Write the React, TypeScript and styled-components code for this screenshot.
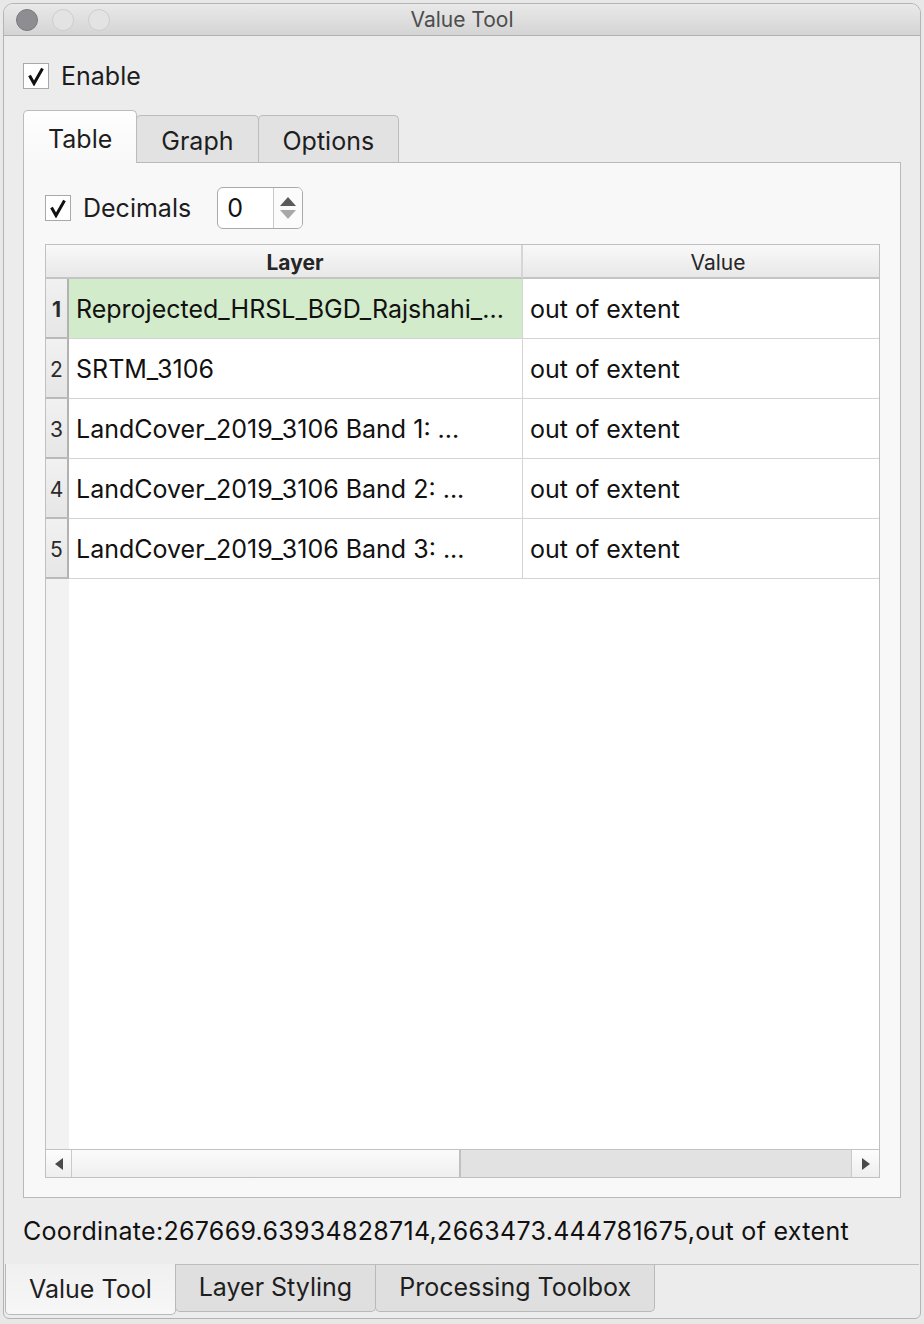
import React from "react";
import styled, { createGlobalStyle } from "styled-components";

const GlobalStyle = createGlobalStyle`
	html, body {
		margin: 0;
		background: #e8e8e8;
	}
	body {
		font-family: Inter, "Liberation Sans", sans-serif;
		color: #1d1d1d;
	}
	* {
		box-sizing: border-box;
	}
`;

const Window = styled.div`
	margin: 3px 0 0 3px;
	width: 918px;
	height: 1316px;
	border: 1px solid #b4b4b4;
	border-radius: 10px 10px 6px 6px;
	background: #ececec;
	display: flex;
	flex-direction: column;
	overflow: hidden;
`;

const TitleBar = styled.div`
	height: 32px;
	flex: none;
	display: grid;
	grid-template-columns: 1fr auto 1fr;
	align-items: center;
	padding: 0 12px;
	background: linear-gradient(#e9e9e9, #d4d4d4);
	border-bottom: 1px solid #b1b1b1;
`;

const Lights = styled.div`
	display: flex;
	gap: 14px;
`;

const Light = styled.span<{ $active?: boolean }>`
	width: 22px;
	height: 22px;
	border-radius: 50%;
	background: ${(p) => (p.$active ? "#8d8d92" : "#e3e3e3")};
	border: 1px solid ${(p) => (p.$active ? "#7a7a7e" : "#cdcdcd")};
`;

const Title = styled.div`
	font-size: 21px;
	color: #4d4d4d;
`;

const Body = styled.div`
	flex: 1;
	display: flex;
	flex-direction: column;
	padding: 27px 19px 3px 19px;
	min-height: 0;
`;

const CheckRow = styled.label`
	display: flex;
	align-items: center;
	gap: 12px;
	height: 26px;
	font-size: 25px;
`;

const Box = styled.span`
	width: 26px;
	height: 26px;
	border: 1px solid #a9a9a9;
	background: #fff;
	display: flex;
	align-items: center;
	justify-content: center;
`;

const TabBar = styled.div`
	display: flex;
	align-items: flex-end;
	height: 52px;
	margin-top: 21px;
	flex: none;
`;

const Tab = styled.div<{ $active?: boolean }>`
	position: relative;
	z-index: ${(p) => (p.$active ? 1 : 0)};
	height: ${(p) => (p.$active ? "53px" : "47px")};
	margin-bottom: ${(p) => (p.$active ? "-1px" : "0")};
	margin-left: ${(p) => (p.$active ? "0" : "-1px")};
	padding: 3px 24px 0;
	display: flex;
	align-items: center;
	font-size: 25px;
	color: #1e1e1e;
	border: 1px solid #bcbcbc;
	border-bottom: none;
	border-radius: 5px 5px 0 0;
	background: ${(p) => (p.$active ? "linear-gradient(#fefefe, #f8f8f8)" : "#e2e2e2")};
`;

const Pane = styled.div`
	flex: 1;
	min-height: 0;
	display: flex;
	flex-direction: column;
	border: 1px solid #b9b9b9;
	background: #f8f8f8;
	padding: 24px 20px 19px 21px;
`;

const OptionRow = styled.div`
	display: flex;
	align-items: center;
	height: 42px;
	flex: none;
`;

const Spin = styled.div`
	margin-left: 26px;
	width: 86px;
	height: 42px;
	border: 1px solid #a9a9a9;
	border-radius: 6px;
	background: #fff;
	display: flex;
	overflow: hidden;
`;

const SpinField = styled.div`
	flex: 1;
	display: flex;
	align-items: center;
	padding-left: 9px;
	font-size: 25px;
	color: #111;
	border-right: 1px solid #c9c9c9;
`;

const SpinArrows = styled.div`
	width: 28px;
	display: flex;
	flex-direction: column;
	align-items: center;
	justify-content: center;
	gap: 4px;
	background: #fbfbfb;
`;

const Table = styled.div`
	margin-top: 15px;
	flex: 1;
	min-height: 0;
	border: 1px solid #c0c0c0;
	background: #fff;
	display: flex;
	flex-direction: column;
	overflow: hidden;
`;

const Row = styled.div<{ $h: number }>`
	display: grid;
	grid-template-columns: 23px 454px 390px;
	height: ${(p) => p.$h}px;
	flex: none;
`;

const HeadCell = styled.div<{ $bold?: boolean; $sep?: boolean }>`
	display: flex;
	align-items: center;
	justify-content: center;
	padding-top: 2px;
	font-size: 21px;
	font-weight: ${(p) => (p.$bold ? 700 : 400)};
	color: #262626;
	background: linear-gradient(#f8f8f8, #e8e8e8);
	border-bottom: 2px solid #c4c4c4;
	border-right: ${(p) => (p.$sep ? "2px solid #d6d6d6" : "none")};
`;

const RowHead = styled.div<{ $current?: boolean }>`
	display: flex;
	align-items: center;
	justify-content: center;
	padding-top: 3px;
	font-size: 21px;
	font-weight: ${(p) => (p.$current ? 700 : 400)};
	color: #2a2a2a;
	background: linear-gradient(#f1f1f1, #e6e6e6);
	border-right: 2px solid #b2b2b2;
	border-bottom: 2px solid #bababa;
`;

const Cell = styled.div<{ $hit?: boolean; $sep?: boolean }>`
	display: flex;
	align-items: center;
	padding-left: 7px;
	font-size: 25px;
	color: #111;
	white-space: nowrap;
	overflow: hidden;
	background: ${(p) => (p.$hit ? "#d2ebca" : "#fff")};
	border-bottom: 1px solid #d4d4d4;
	border-right: ${(p) => (p.$sep ? "1px solid #d4d4d4" : "none")};
`;

const Empty = styled.div`
	flex: 1;
	background: linear-gradient(to right, #f2f2f2 23px, #fff 23px);
`;

const HScroll = styled.div`
	height: 28px;
	flex: none;
	display: grid;
	grid-template-columns: 26px 389px 1fr 28px;
	border-top: 1px solid #c3c3c3;
	background: #e2e2e2;
`;

const ScrollButton = styled.div<{ $side: "left" | "right" }>`
	display: flex;
	align-items: center;
	justify-content: center;
	background: linear-gradient(#fdfdfd, #eeeeee);
	${(p) => (p.$side === "left" ? "border-right: 1px solid #cacaca;" : "border-left: 1px solid #cacaca;")}
`;

const Thumb = styled.div`
	background: linear-gradient(#fbfbfb, #efefef);
	border-right: 2px solid #c0c0c0;
`;

const Coordinate = styled.div`
	margin-top: 18px;
	height: 30px;
	line-height: 30px;
	font-size: 25px;
	letter-spacing: 0.3px;
	color: #111;
	white-space: nowrap;
	flex: none;
`;

const DockTabs = styled.div`
	margin: 18px -18px 0 -18px;
	height: 51px;
	flex: none;
	display: flex;
	align-items: flex-start;
	border-top: 1px solid #bdbdbd;
`;

const DockTab = styled.div<{ $active?: boolean }>`
	height: ${(p) => (p.$active ? "51px" : "47px")};
	margin-top: ${(p) => (p.$active ? "-1px" : "0")};
	margin-left: ${(p) => (p.$active ? "0" : "-1px")};
	padding: 0 ${(p) => (p.$active ? "23px" : "23px")} ${(p) => (p.$active ? "0" : "2px")};
	display: flex;
	align-items: center;
	font-size: 25px;
	color: #1e1e1e;
	background: ${(p) => (p.$active ? "linear-gradient(#f0f0f0, #f7f7f7)" : "#dfdfdf")};
	border: 1px solid #b9b9b9;
	border-top: none;
	border-radius: 0 0 5px 5px;
`;

const Check = () => (
	<Box>
		<svg width="20" height="20" viewBox="0 0 20 20">
			<path d="M3.5 9.5 L8 17.5 L16.5 2.5" fill="none" stroke="#111" strokeWidth="3" />
		</svg>
	</Box>
);

const layers = [
	"Reprojected_HRSL_BGD_Rajshahi_...",
	"SRTM_3106",
	"LandCover_2019_3106 Band 1: ...",
	"LandCover_2019_3106 Band 2: ...",
	"LandCover_2019_3106 Band 3: ...",
];

export default function App() {
	return (
		<>
			<GlobalStyle />
			<Window>
				<TitleBar>
					<Lights>
						<Light $active />
						<Light />
						<Light />
					</Lights>
					<Title>Value Tool</Title>
					<span />
				</TitleBar>
				<Body>
					<CheckRow>
						<Check />
						Enable
					</CheckRow>
					<TabBar>
						<Tab $active>Table</Tab>
						<Tab>Graph</Tab>
						<Tab>Options</Tab>
					</TabBar>
					<Pane>
						<OptionRow>
							<CheckRow>
								<Check />
								Decimals
							</CheckRow>
							<Spin>
								<SpinField>0</SpinField>
								<SpinArrows>
									<svg width="16" height="9" viewBox="0 0 16 9">
										<path d="M8 0 L16 9 L0 9 Z" fill="#5a5a5a" />
									</svg>
									<svg width="16" height="9" viewBox="0 0 16 9">
										<path d="M0 0 L16 0 L8 9 Z" fill="#a8a8a8" />
									</svg>
								</SpinArrows>
							</Spin>
						</OptionRow>
						<Table>
							<Row $h={34}>
								<HeadCell />
								<HeadCell $bold $sep>Layer</HeadCell>
								<HeadCell>Value</HeadCell>
							</Row>
							{layers.map((name, i) => (
								<Row $h={60} key={name}>
									<RowHead $current={i === 0}>{i + 1}</RowHead>
									<Cell $hit={i === 0} $sep>{name}</Cell>
									<Cell>out of extent</Cell>
								</Row>
							))}
							<Empty />
							<HScroll>
								<ScrollButton $side="left">
									<svg width="8" height="12" viewBox="0 0 8 12">
										<path d="M8 0 L8 12 L0 6 Z" fill="#4a4a4a" />
									</svg>
								</ScrollButton>
								<Thumb />
								<span />
								<ScrollButton $side="right">
									<svg width="8" height="12" viewBox="0 0 8 12">
										<path d="M0 0 L0 12 L8 6 Z" fill="#4a4a4a" />
									</svg>
								</ScrollButton>
							</HScroll>
						</Table>
					</Pane>
					<Coordinate>Coordinate:267669.63934828714,2663473.444781675,out of extent</Coordinate>
					<DockTabs>
						<DockTab $active>Value Tool</DockTab>
						<DockTab>Layer Styling</DockTab>
						<DockTab>Processing Toolbox</DockTab>
					</DockTabs>
				</Body>
			</Window>
		</>
	);
}
